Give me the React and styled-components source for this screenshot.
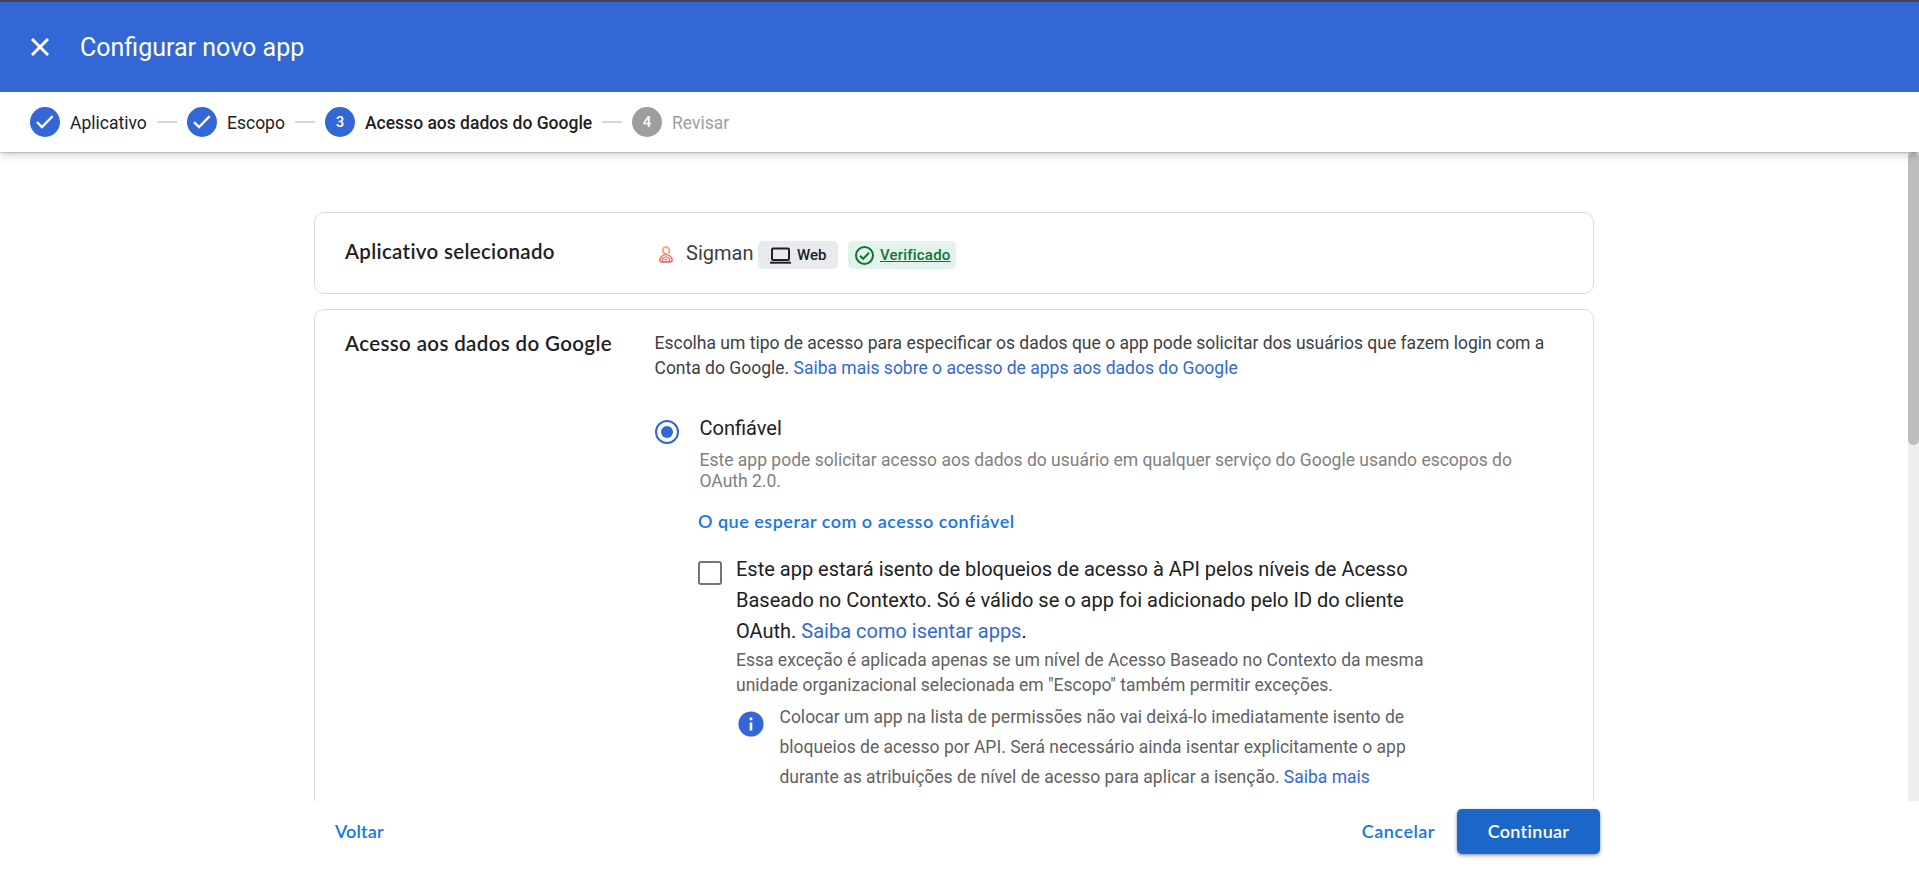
import React from "react";
import styled, { createGlobalStyle } from "styled-components";

const Global = createGlobalStyle`
  * { box-sizing: border-box; }
  html, body, #root { height: 100%; }
  body {
    margin: 0;
    overflow: hidden;
    background: #fff;
    font-family: Roboto, "Liberation Sans", sans-serif;
    font-size: 17.5px;
    color: #202124;
  }
`;

const display = `Lato, "Open Sans", sans-serif`;

const Page = styled.div`
  display: flex;
  flex-direction: column;
  height: 100vh;
`;

const Header = styled.header`
  display: flex;
  align-items: center;
  flex: none;
  height: 92px;
  padding: 0 30px;
  border-top: 2px solid #474554;
  background: #3367d6;
  color: #fff;
`;

const CloseIcon = styled.svg`
  width: 20px;
  height: 20px;
  margin-right: 30px;
`;

const Title = styled.h1`
  margin: 0;
  padding-top: 2px;
  font-size: 25px;
  font-weight: 400;
  line-height: 30px;
`;

const Stepper = styled.nav`
  position: relative;
  z-index: 1;
  display: flex;
  align-items: center;
  flex: none;
  gap: 10px;
  height: 60px;
  padding: 0 30px;
  background: #fff;
  box-shadow: 0 0 2px rgba(0, 0, 0, 0.4), 0 2px 9px rgba(0, 0, 0, 0.22);
  clip-path: inset(0 0 -20px 0);
`;

const StepMark = styled.span`
  display: flex;
  align-items: center;
  justify-content: center;
  width: 30px;
  height: 30px;
  border-radius: 50%;
  background: ${(p) => (p.$muted ? "#9e9e9e" : "#3367d6")};
  color: #fff;
  font-size: 15px;
  font-weight: 500;
`;

const StepLabel = styled.span`
  width: ${(p) => p.$width}px;
  padding-top: 2px;
  white-space: nowrap;
  line-height: 24px;
  color: ${(p) => (p.$muted ? "#9e9e9e" : "#212121")};
  font-weight: ${(p) => (p.$current ? 500 : 400)};
`;

const StepLine = styled.span`
  width: 20px;
  height: 2px;
  background: #d6d6d6;
`;

const Scroller = styled.div`
  display: flex;
  flex: 1;
  min-height: 0;
`;

const Content = styled.main`
  flex: 1;
  overflow: hidden;
  padding: 60px 0 0 314px;
`;

const ScrollTrack = styled.div`
  width: 11px;
  background: #eeeeee;
`;

const ScrollThumb = styled.div`
  height: 293px;
  border-radius: 6px;
  background: #bdbdbd;
`;

const Card = styled.section`
  display: flex;
  width: 1280px;
  height: ${(p) => p.$height}px;
  margin-bottom: 15px;
  padding-left: 30px;
  border: 1px solid #dadce0;
  border-radius: 10px;
`;

const CardTitle = styled.h2`
  flex: none;
  width: 309.5px;
  margin: 0;
  padding-top: ${(p) => p.$top}px;
  font-family: ${display};
  font-size: 20.5px;
  font-weight: 600;
  line-height: 30px;
  letter-spacing: ${(p) => p.$spacing}px;
  white-space: nowrap;
`;

const AppRow = styled.div`
  display: flex;
  align-items: center;
  height: 28px;
  margin-top: 28px;
`;

const AppLogo = styled.svg`
  width: 14px;
  height: 17px;
  margin: -2px 13px 0 4.5px;
`;

const AppName = styled.span`
  width: 72px;
  margin-top: -4px;
  font-size: 20px;
  color: #3c4043;
`;

const Chip = styled.span`
  display: flex;
  align-items: center;
  width: ${(p) => p.$width}px;
  height: 28px;
  margin-right: 10px;
  padding-left: ${(p) => p.$pad}px;
  border-radius: 5px;
  background: ${(p) => (p.$good ? "#e1f3ea" : "#e8eaed")};
  color: ${(p) => (p.$good ? "#137333" : "#202124")};
  font-size: 15px;
  font-weight: 500;
  letter-spacing: ${(p) => (p.$good ? 0.2 : 0)}px;
  text-decoration: ${(p) => (p.$good ? "underline" : "none")};
  text-decoration-thickness: 1px;
  text-underline-offset: 1px;

  svg { margin-right: 6px; }
`;

const Body = styled.div`
  padding-top: 21px;
`;

const Text = styled.p`
  margin: ${(p) => p.$gap || 0}px 0 0;
  color: ${(p) => p.$color};
  font-size: ${(p) => p.$size || 17.5}px;
  line-height: ${(p) => p.$line}px;
  white-space: nowrap;
`;

const Link = styled.a`
  color: #3367d6;
`;

const Option = styled.div`
  display: flex;
  padding-top: 35px;
`;

const Radio = styled.span`
  display: flex;
  align-items: center;
  justify-content: center;
  width: 24px;
  height: 24px;
  margin: 4px 21px 0 0;
  border: 2px solid #3367d6;
  border-radius: 50%;

  &::after {
    content: "";
    width: 12px;
    height: 12px;
    border-radius: 50%;
    background: #3367d6;
  }
`;

const ExpectLink = styled.a`
  display: block;
  margin: 15px 0 0 -1.5px;
  color: #1a73e8;
  font-family: ${display};
  font-size: 18px;
  font-weight: 600;
  line-height: 29px;
  letter-spacing: 0.5px;
`;

const CheckRow = styled.div`
  display: flex;
  margin: 18px 0 0 -2px;
`;

const Checkbox = styled.span`
  flex: none;
  width: 24px;
  height: 24px;
  margin: 7px 14.5px 0 0;
  border: 2px solid #757575;
  border-radius: 3px;
`;

const Notice = styled.div`
  display: flex;
  margin-top: 4px;

  svg { margin: 9px 15.5px 0 2px; }
`;

const Footer = styled.footer`
  display: flex;
  align-items: center;
  flex: none;
  height: 68px;
  padding: 0 319px 7px 335px;
`;

const TextButton = styled.button`
  padding: 0 0 1px;
  border: 0;
  background: none;
  color: #1a73e8;
  font-family: ${display};
  font-size: 18px;
  font-weight: 600;
  letter-spacing: ${(p) => p.$spacing}px;
`;

const Actions = styled.div`
  display: flex;
  align-items: center;
  gap: 22px;
  margin-left: auto;
`;

const PrimaryButton = styled(TextButton)`
  width: 143px;
  height: 45px;
  border-radius: 5px;
  background: #1b66c9;
  color: #fff;
  box-shadow: 0 1px 3px rgba(60, 64, 67, 0.4), 0 2px 4px rgba(60, 64, 67, 0.25);
`;

const StepCheck = () => (
  <svg width="20" height="16" viewBox="0 0 20 16" fill="none" stroke="#fff" strokeWidth="2.4">
    <path d="M2 8.2 L7 13 L17.7 2.2" />
  </svg>
);

export default function App() {
  return (
    <Page>
      <Global />
      <Header>
        <CloseIcon viewBox="0 0 20 20" stroke="#fff" strokeWidth="3">
          <path d="M2 2 L18 18 M18 2 L2 18" />
        </CloseIcon>
        <Title>Configurar novo app</Title>
      </Header>
      <Stepper>
        <StepMark><StepCheck /></StepMark>
        <StepLabel $width={77}>Aplicativo</StepLabel>
        <StepLine />
        <StepMark><StepCheck /></StepMark>
        <StepLabel $width={58}>Escopo</StepLabel>
        <StepLine />
        <StepMark>3</StepMark>
        <StepLabel $width={227} $current>Acesso aos dados do Google</StepLabel>
        <StepLine />
        <StepMark $muted>4</StepMark>
        <StepLabel $width={58} $muted>Revisar</StepLabel>
      </Stepper>
      <Scroller>
        <Content>
          <Card $height={82}>
            <CardTitle $top={23} $spacing={0.32}>Aplicativo selecionado</CardTitle>
            <AppRow>
              <AppLogo viewBox="0 0 14 17" fill="none" stroke="url(#sigman)" strokeWidth="1.8">
                <defs>
                  <linearGradient id="sigman" gradientUnits="userSpaceOnUse" x1="0" y1="0" x2="0" y2="17">
                    <stop offset="0" stopColor="#f9b384" />
                    <stop offset="1" stopColor="#f0616d" />
                  </linearGradient>
                </defs>
                <path d="M9.5 7 C11 5.6 10.6 1 7 1 C3.4 1 3 5.6 5 7 L10.8 10 C13.8 12 13.8 15.9 11 15.9 H3 C.2 15.9 .2 12 3.2 10 L7.2 7.8" />
                <path d="M3.6 14.8 V12.6 L7 10.8 L10.4 12.6 V14.8 M5.6 13.6 H8.4" strokeWidth="1.2" />
              </AppLogo>
              <AppName>Sigman</AppName>
              <Chip $width={80} $pad={12}>
                <svg width="21" height="17" viewBox="0 0 21 17" fill="none" stroke="#202124" strokeWidth="2">
                  <rect x="2" y="1.5" width="17" height="11.5" rx="1" />
                  <path d="M0 15.7 H21" />
                </svg>
                Web
              </Chip>
              <Chip $width={108} $pad={7} $good>
                <svg width="19" height="19" viewBox="0 0 19 19" fill="none" stroke="#137333" strokeWidth="2">
                  <circle cx="9.5" cy="9.5" r="8.5" />
                  <path d="M5 9.8 L8.2 12.8 L14 6.8" />
                </svg>
                Verificado
              </Chip>
            </AppRow>
          </Card>
          <Card $height={700}>
            <CardTitle $top={18} $spacing={0.37}>Acesso aos dados do Google</CardTitle>
            <Body>
              <Text $color="#3c4043" $line={25}>
                Escolha um tipo de acesso para especificar os dados que o app pode solicitar dos usuários que fazem login com a
                <br />
                Conta do Google. <Link>Saiba mais sobre o acesso de apps aos dados do Google</Link>
              </Text>
              <Option>
                <Radio />
                <div>
                  <Text $color="#212121" $size={20} $line={25}>Confiável</Text>
                  <Text $color="#80807f" $line={21} $gap={9}>
                    Este app pode solicitar acesso aos dados do usuário em qualquer serviço do Google usando escopos do
                    <br />
                    OAuth 2.0.
                  </Text>
                  <ExpectLink>O que esperar com o acesso confiável</ExpectLink>
                  <CheckRow>
                    <Checkbox />
                    <div>
                      <Text $color="#212121" $size={20} $line={31}>
                        Este app estará isento de bloqueios de acesso à API pelos níveis de Acesso
                        <br />
                        Baseado no Contexto. Só é válido se o app foi adicionado pelo ID do cliente
                        <br />
                        OAuth. <Link>Saiba como isentar apps</Link>.
                      </Text>
                      <Text $color="#616161" $line={25} $gap={1}>
                        Essa exceção é aplicada apenas se um nível de Acesso Baseado no Contexto da mesma
                        <br />
                        unidade organizacional selecionada em "Escopo" também permitir exceções.
                      </Text>
                      <Notice>
                        <svg width="26" height="26" viewBox="0 0 26 26">
                          <circle cx="13" cy="13" r="12.6" fill="#3367d6" />
                          <path d="M11.7 6.6h2.6v2.6h-2.6z M11.7 11.4h2.6v8h-2.6z" fill="#fff" />
                        </svg>
                        <Text $color="#616161" $line={30}>
                          Colocar um app na lista de permissões não vai deixá-lo imediatamente isento de
                          <br />
                          bloqueios de acesso por API. Será necessário ainda isentar explicitamente o app
                          <br />
                          durante as atribuições de nível de acesso para aplicar a isenção. <Link>Saiba mais</Link>
                        </Text>
                      </Notice>
                    </div>
                  </CheckRow>
                </div>
              </Option>
            </Body>
          </Card>
        </Content>
        <ScrollTrack><ScrollThumb /></ScrollTrack>
      </Scroller>
      <Footer>
        <TextButton $spacing={0.15}>Voltar</TextButton>
        <Actions>
          <TextButton $spacing={0.5}>Cancelar</TextButton>
          <PrimaryButton $spacing={0.3}>Continuar</PrimaryButton>
        </Actions>
      </Footer>
    </Page>
  );
}
